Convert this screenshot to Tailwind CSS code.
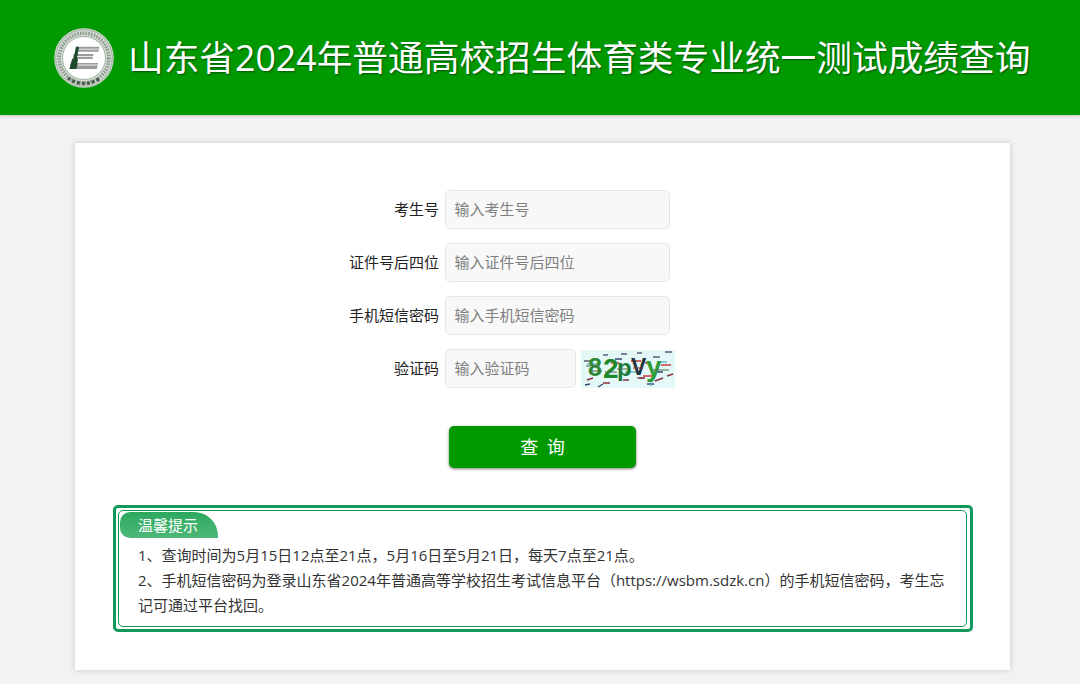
<!DOCTYPE html>
<html lang="zh-CN">
<head>
<meta charset="utf-8">
<title>山东省2024年普通高校招生体育类专业统一测试成绩查询</title>
<script src="https://cdn.jsdelivr.net/npm/@tailwindcss/browser@4"></script>
</head>
<body class="h-[684px] overflow-hidden bg-[#f2f2f2] font-['Open_Sans','Noto_Sans_CJK_SC',sans-serif] text-[#333]">
<header class="flex h-[115px] items-center bg-[#009900] pl-[54px] shadow-[0_1px_3px_rgba(0,0,0,0.2)]">
  <svg class="h-[60px] w-[60px] shrink-0" viewBox="0 0 60 60">
    <circle cx="30" cy="30" r="29.8" fill="#d4dbd4"/>
    <circle cx="30" cy="30" r="28.3" fill="none" stroke="#93a393" stroke-width="0.8"/>
    <circle cx="30" cy="30" r="24.8" fill="none" stroke="#8d9c8d" stroke-width="3.6" stroke-dasharray="1.6 1.2"/>
    <path d="M14 50A26 26 0 0 0 46 50" fill="none" stroke="#4a5a4a" stroke-width="3.4" stroke-dasharray="3 2"/>
    <circle cx="30" cy="30" r="21.5" fill="#fff" stroke="#8fa68f" stroke-width="0.8"/>
    <path d="M22 18.7H45.5L44.5 23.7H21ZM19.5 26H39.5L38.5 31H18.5ZM16.5 35H44L43 41H15.5Z" fill="#9a9e9a"/>
    <path d="M22 18.7H25L23 31H19.5ZM18 31H24L22.5 41H15.5Z" fill="#1c4a2a"/>
    <path d="M25 21.2H45M23 28.5H39M24 37H43.5" stroke="#fff" stroke-width="0.8"/>
  </svg>
  <h1 class="ml-[14px] whitespace-nowrap text-[35.7px] leading-none font-normal text-white [text-shadow:1px_1px_2px_rgba(0,50,0,0.7)]">山东省2024年普通高校招生体育类专业统一测试成绩查询</h1>
</header>

<main class="mt-[28px] ml-[75px] h-[527px] w-[935px] bg-white px-[38px] pt-[47px] shadow-[0_0_6px_rgba(0,0,0,0.18)]">
  <form class="flex flex-col gap-[14px] text-[15px]">
    <div class="flex h-[39px] items-center">
      <label class="w-[332px] pr-[6px] text-right text-[#222]">考生号</label>
      <input class="h-[39px] w-[224.5px] rounded-[5px] border border-[#e6e6e6] bg-[#f8f8f8] px-[8.5px] pb-[2px] outline-none placeholder:text-[#808080]" placeholder="输入考生号">
    </div>
    <div class="flex h-[39px] items-center">
      <label class="w-[332px] pr-[6px] text-right text-[#222]">证件号后四位</label>
      <input class="h-[39px] w-[224.5px] rounded-[5px] border border-[#e6e6e6] bg-[#f8f8f8] px-[8.5px] pb-[2px] outline-none placeholder:text-[#808080]" placeholder="输入证件号后四位">
    </div>
    <div class="flex h-[39px] items-center">
      <label class="w-[332px] pr-[6px] text-right text-[#222]">手机短信密码</label>
      <input class="h-[39px] w-[224.5px] rounded-[5px] border border-[#e6e6e6] bg-[#f8f8f8] px-[8.5px] pb-[2px] outline-none placeholder:text-[#808080]" placeholder="输入手机短信密码">
    </div>
    <div class="flex h-[39px] items-center">
      <label class="w-[332px] pr-[6px] text-right text-[#222]">验证码</label>
      <input class="h-[39px] w-[131px] rounded-[5px] border border-[#e6e6e6] bg-[#f8f8f8] px-[8.5px] pb-[2px] outline-none placeholder:text-[#808080]" placeholder="输入验证码">
      <svg class="mt-[1px] ml-[5px] h-[38px] w-[94px]" viewBox="0 0 94 38">
        <rect width="94" height="38" fill="#e4f8f8"/>
        <g stroke-width="1.4" fill="none">
          <path d="M3 11h6M22 5h5M40 4h6M56 3h5M72 7h7M84 2h7" stroke="#5c5c78"/>
          <path d="M6 30l6-2M22 33h7M42 30h6M58 28h6M74 31l8-3M86 26l6-2" stroke="#8a3040"/>
          <path d="M30 13h8M50 11h10M62 26h9M64 13h6M80 15h10" stroke="#c43838"/>
          <path d="M4 35l5-1M17 37l5-3M66 34h7M34 9h7M76 22h6" stroke="#384870"/>
          <path d="M6 14h10M44 22h16M76 12h10M70 30v6" stroke="#68b8c8"/>
        </g>
        <g font-family="Liberation Sans" font-weight="700">
          <text x="7" y="26" fill="#2c8a34" font-size="25">8</text>
          <text x="22" y="28" fill="#1e8a2a" font-size="28">2</text>
          <text x="36" y="26" fill="#1f7a36" font-size="24">p</text>
          <text x="50" y="25" fill="#22343c" font-size="23">V</text>
          <text x="65" y="26" fill="#2f9a3c" font-size="28">y</text>
        </g>
        <g stroke-width="1.2" fill="none">
          <path d="M5 16h14M9 21h12M24 22h12M36 19h10M72 20h16" stroke="#4a6a40"/>
          <path d="M52 18h10M56 28h6" stroke="#7a3040"/>
        </g>
      </svg>
    </div>
    <button type="button" class="mt-[24px] ml-[336px] h-[42px] w-[187px] rounded-[5px] bg-[#009900] pl-[2px] text-[18px] tracking-[2px] text-white shadow-[0_1px_3px_rgba(0,0,0,0.5)]">查 询</button>
  </form>

  <section class="mt-[37px] h-[127px] w-[860px] rounded-[5px] border-[3px] border-[#129a5c] py-[2px] pr-[3px] pl-[2px]">
    <div class="h-full rounded-[5px] border border-[#129a5c] pt-[1px] pr-[17px] pl-[1px] text-[15px] leading-[25px]">
      <div class="flex h-[26px] w-[98px] items-center rounded-tl-[10px] rounded-tr-[24px] rounded-bl-[10px] bg-gradient-to-b from-[#2da85f] to-[#4cb878] pl-[18px] text-white">温馨提示</div>
      <p class="mt-[5px] pl-[18px] text-[#333]">1、查询时间为5月15日12点至21点，5月16日至5月21日，每天7点至21点。</p>
      <p class="pl-[18px] text-[#333]">2、手机短信密码为登录山东省2024年普通高等学校招生考试信息平台（https://wsbm.sdzk.cn）的手机短信密码，考生忘记可通过平台找回。</p>
    </div>
  </section>
</main>
</body>
</html>
